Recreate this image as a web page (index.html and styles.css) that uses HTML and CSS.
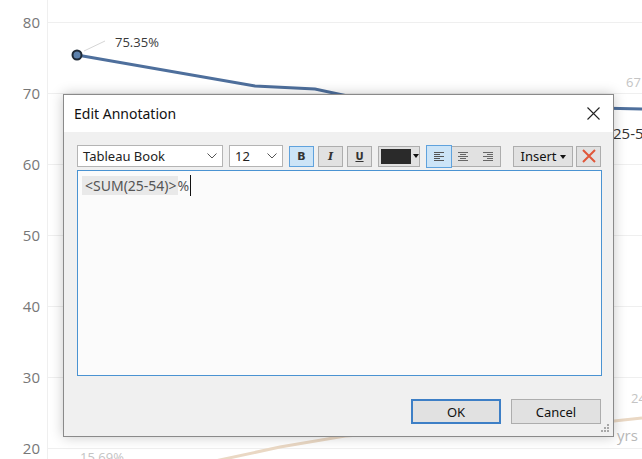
FILE: index.html
```html
<!DOCTYPE html>
<html>
<head>
<meta charset="utf-8">
<link rel="stylesheet" href="styles.css">
</head>
<body>
<div class="page">
  <svg class="chart" width="642" height="459" viewBox="0 0 642 459">
    <g stroke="#efefef" stroke-width="1">
      <line x1="47" y1="22.5" x2="642" y2="22.5"/>
      <line x1="47" y1="93.5" x2="642" y2="93.5"/>
      <line x1="47" y1="164.5" x2="642" y2="164.5"/>
      <line x1="47" y1="235.5" x2="642" y2="235.5"/>
      <line x1="47" y1="306.5" x2="642" y2="306.5"/>
      <line x1="47" y1="377.5" x2="642" y2="377.5"/>
      <line x1="47" y1="448.5" x2="642" y2="448.5"/>
      <line x1="47.5" y1="0" x2="47.5" y2="459"/>
    </g>
    <g class="axis" fill="#777">
      <text x="40" y="28" text-anchor="end">80</text>
      <text x="40" y="99" text-anchor="end">70</text>
      <text x="40" y="170" text-anchor="end">60</text>
      <text x="40" y="241" text-anchor="end">50</text>
      <text x="40" y="312" text-anchor="end">40</text>
      <text x="40" y="383" text-anchor="end">30</text>
      <text x="40" y="454" text-anchor="end">20</text>
    </g>
    <polyline points="215,461 280,447 345,436 500,426 614,421 642,418" fill="none" stroke="#ead8c4" stroke-width="3"/>
    <polyline points="77,55 255,86 315,89 380,103 642,109" fill="none" stroke="#4e6f9c" stroke-width="3"/>
    <line x1="84" y1="51" x2="105" y2="41" stroke="#d6d6d6" stroke-width="1"/>
    <circle cx="77" cy="55" r="4.5" fill="#5d82ad" stroke="#1f2a36" stroke-width="2"/>
    <text class="lbl-dark" x="115" y="47">75.35%</text>
    <text class="lbl-light" x="626" y="87">67</text>
    <text class="lbl-big" x="613" y="139">25-5</text>
    <text class="lbl-light" x="631" y="403">24</text>
    <text class="lbl-yrs" x="617" y="441">yrs</text>
    <text class="lbl-light" x="80" y="462">15.69%</text>
  </svg>

  <div class="dialog">
    <div class="titlebar">
      <span class="title">Edit Annotation</span>
      <svg class="close" width="13" height="13" viewBox="0 0 13 13"><path d="M0.5 0.5 L12.5 12.5 M12.5 0.5 L0.5 12.5" stroke="#222" stroke-width="1.1" fill="none"/></svg>
    </div>
    <div class="body">
      <div class="toolbar">
        <div class="combo font-combo"><span>Tableau Book</span>
          <svg class="chev" width="10" height="6" viewBox="0 0 10 6"><path d="M0.5 0.5 L5 5 L9.5 0.5" stroke="#555" fill="none"/></svg>
        </div>
        <div class="combo size-combo"><span>12</span>
          <svg class="chev" width="10" height="6" viewBox="0 0 10 6"><path d="M0.5 0.5 L5 5 L9.5 0.5" stroke="#555" fill="none"/></svg>
        </div>
        <div class="tbtn sel bold">B</div>
        <div class="tbtn ital">I</div>
        <div class="tbtn und">U</div>
        <div class="tbtn color"><span class="swatch"></span><span class="tri"></span></div>
        <div class="align">
          <div class="aseg sel">
            <svg width="10" height="9" viewBox="0 0 10 9"><g stroke="#555"><line x1="0" y1="0.5" x2="10" y2="0.5"/><line x1="0" y1="2.5" x2="6" y2="2.5"/><line x1="0" y1="4.5" x2="10" y2="4.5"/><line x1="0" y1="6.5" x2="6" y2="6.5"/><line x1="0" y1="8.5" x2="10" y2="8.5"/></g></svg>
          </div>
          <div class="aseg">
            <svg width="10" height="9" viewBox="0 0 10 9"><g stroke="#666"><line x1="0" y1="0.5" x2="10" y2="0.5"/><line x1="2" y1="2.5" x2="8" y2="2.5"/><line x1="0" y1="4.5" x2="10" y2="4.5"/><line x1="2" y1="6.5" x2="8" y2="6.5"/><line x1="0" y1="8.5" x2="10" y2="8.5"/></g></svg>
          </div>
          <div class="aseg">
            <svg width="10" height="9" viewBox="0 0 10 9"><g stroke="#666"><line x1="0" y1="0.5" x2="10" y2="0.5"/><line x1="4" y1="2.5" x2="10" y2="2.5"/><line x1="0" y1="4.5" x2="10" y2="4.5"/><line x1="4" y1="6.5" x2="10" y2="6.5"/><line x1="0" y1="8.5" x2="10" y2="8.5"/></g></svg>
          </div>
        </div>
        <div class="tbtn insert">Insert<span class="tri small"></span></div>
        <div class="tbtn clear">
          <svg width="14" height="14" viewBox="0 0 14 14"><path d="M1 1 L13 13 M13 1 L1 13" stroke="#e0573a" stroke-width="2" fill="none"/></svg>
        </div>
      </div>
      <div class="editor">
        <span class="field">&lt;SUM(25-54)&gt;</span><span class="pct">%</span><span class="caret"></span>
      </div>
      <div class="actions">
        <div class="btn ok">OK</div>
        <div class="btn">Cancel</div>
      </div>
      <svg class="grip" width="10" height="10" viewBox="0 0 10 10"><g fill="#a8a8a8"><rect x="7" y="0" width="2" height="2"/><rect x="4" y="3" width="2" height="2"/><rect x="7" y="3" width="2" height="2"/><rect x="1" y="6" width="2" height="2"/><rect x="4" y="6" width="2" height="2"/><rect x="7" y="6" width="2" height="2"/></g></svg>
    </div>
  </div>
</div>
</body>
</html>
```

FILE: styles.css
```css
html, body {
  margin: 0;
  padding: 0;
  background: #ffffff;
}
.page {
  position: relative;
  width: 642px;
  height: 459px;
  overflow: hidden;
  font-family: "Noto Sans", "Open Sans", sans-serif;
}
.chart {
  position: absolute;
  left: 0;
  top: 0;
}
.axis text {
  font-family: "Open Sans", sans-serif;
  font-size: 15px;
}
.lbl-dark {
  font-family: "Open Sans", sans-serif;
  font-size: 13px;
  font-weight: 500;
  fill: #3a3a3a;
}
.lbl-light {
  font-family: "Open Sans", sans-serif;
  font-size: 13px;
  fill: #c4c4c4;
}
.lbl-big {
  font-family: "Open Sans", sans-serif;
  font-size: 15px;
  fill: #333;
}
.lbl-yrs {
  font-family: "Open Sans", sans-serif;
  font-size: 15px;
  fill: #b8b8b8;
}
.dialog {
  position: absolute;
  left: 63px;
  top: 94px;
  width: 549px;
  height: 341px;
  border: 1px solid #8a8a8a;
  background: #f0f0f0;
  box-shadow: 0 0 12px rgba(0, 0, 0, 0.22);
  display: flex;
  flex-direction: column;
}
.titlebar {
  height: 37px;
  background: #ffffff;
  display: flex;
  align-items: center;
  justify-content: space-between;
  padding: 0 13px 0 10px;
  flex: none;
}
.title {
  font-size: 14px;
  color: #111;
}
.close {
  display: block;
}
.body {
  position: relative;
  flex: 1;
  padding: 13px 10px 0 13px;
  display: flex;
  flex-direction: column;
}
.toolbar {
  display: flex;
  align-items: center;
  height: 22px;
}
.combo {
  box-sizing: border-box;
  height: 22px;
  background: #fff;
  border: 1px solid #b4b4b4;
  display: flex;
  align-items: center;
  justify-content: space-between;
  padding: 0 5px 0 5px;
  font-size: 13px;
  color: #222;
}
.font-combo {
  width: 146px;
}
.size-combo {
  width: 54px;
  margin-left: 6px;
}
.chev {
  display: block;
}
.tbtn {
  box-sizing: border-box;
  height: 21px;
  width: 25px;
  background: #e1e1e1;
  border: 1px solid #adadad;
  display: flex;
  align-items: center;
  justify-content: center;
  font-family: "DejaVu Sans", sans-serif;
  font-size: 11px;
  color: #333;
  margin-left: 4px;
}
.tbtn.sel {
  background: #cce4f7;
  border-color: #5fa2dd;
}
.bold {
  font-weight: bold;
  margin-left: 6px;
}
.ital {
  font-family: "DejaVu Serif", serif;
  font-style: italic;
  font-weight: bold;
}
.und {
  font-weight: bold;
  text-decoration: underline;
  font-size: 10px;
}
.color {
  width: 42px;
  margin-left: 6px;
  justify-content: flex-start;
  padding-left: 2px;
}
.swatch {
  width: 31px;
  height: 15px;
  background: #2a2a2a;
}
.tri {
  width: 0;
  height: 0;
  border-left: 3.5px solid transparent;
  border-right: 3.5px solid transparent;
  border-top: 4px solid #111;
  margin-left: 2px;
}
.tri.small {
  margin-left: 3px;
  margin-top: 1px;
}
.align {
  box-sizing: border-box;
  margin-left: 7px;
  height: 21px;
  width: 74px;
  border: 1px solid #adadad;
  background: #e1e1e1;
  display: flex;
}
.aseg {
  flex: 1;
  display: flex;
  align-items: center;
  justify-content: center;
}
.aseg.sel {
  background: #cce4f7;
  outline: 1px solid #5fa2dd;
  margin: -1px 0 -1px -1px;
}
.aseg svg {
  display: block;
}
.insert {
  width: 60px;
  margin-left: 12px;
  font-family: "Noto Sans", sans-serif;
  font-size: 13px;
  color: #111;
}
.clear {
  width: 25px;
  margin-left: 3px;
}
.clear svg {
  display: block;
}
.editor {
  box-sizing: border-box;
  margin-top: 3px;
  height: 206px;
  width: 525px;
  background: #fbfbfb;
  border: 1px solid #4a93d2;
  padding: 4px 4px;
  font-size: 14px;
  color: #555;
  display: flex;
  align-items: flex-start;
}
.field {
  background: #e9e9e9;
  padding: 0 1px 0 3px;
  line-height: 19px;
  margin-top: 1px;
}
.pct {
  line-height: 19px;
  margin-top: 1px;
}
.caret {
  width: 1px;
  height: 21px;
  background: #111;
  margin-left: 1px;
}
.actions {
  display: flex;
  justify-content: flex-end;
  gap: 10px;
  margin-top: 23px;
  padding-right: 2px;
}
.btn {
  box-sizing: border-box;
  width: 90px;
  height: 25px;
  background: #e1e1e1;
  border: 1px solid #adadad;
  display: flex;
  align-items: center;
  justify-content: center;
  font-size: 13px;
  color: #111;
}
.btn.ok {
  border: 2px solid #3d7fc6;
}
.grip {
  position: absolute;
  right: 3px;
  bottom: 2px;
}
```
